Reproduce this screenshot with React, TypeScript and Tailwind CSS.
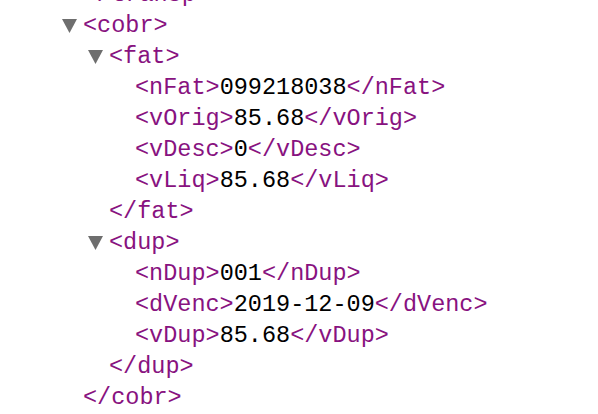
import React from 'react';

type Line =
  | { kind: 'open'; depth: number; tag: string }
  | { kind: 'close'; depth: number; tag: string }
  | { kind: 'leaf'; depth: number; tag: string; value: string };

const lines: Line[] = [
  { kind: 'close', depth: 0, tag: 'transp' },
  { kind: 'open', depth: 0, tag: 'cobr' },
  { kind: 'open', depth: 1, tag: 'fat' },
  { kind: 'leaf', depth: 2, tag: 'nFat', value: '099218038' },
  { kind: 'leaf', depth: 2, tag: 'vOrig', value: '85.68' },
  { kind: 'leaf', depth: 2, tag: 'vDesc', value: '0' },
  { kind: 'leaf', depth: 2, tag: 'vLiq', value: '85.68' },
  { kind: 'close', depth: 1, tag: 'fat' },
  { kind: 'open', depth: 1, tag: 'dup' },
  { kind: 'leaf', depth: 2, tag: 'nDup', value: '001' },
  { kind: 'leaf', depth: 2, tag: 'dVenc', value: '2019-12-09' },
  { kind: 'leaf', depth: 2, tag: 'vDup', value: '85.68' },
  { kind: 'close', depth: 1, tag: 'dup' },
  { kind: 'close', depth: 0, tag: 'cobr' },
];

// text start for each depth
const textPad = ['pl-[83px]', 'pl-[109px]', 'pl-[135px]'];
// start of the triangle for each depth (text start minus 22px)
const arrowPad = ['pl-[62px]', 'pl-[88px]', 'pl-[114px]'];

function Arrow() {
  return (
    <span className="flex w-[21px] shrink-0 items-center">
      <svg width="15" height="14" viewBox="0 0 15 14">
        <polygon points="0,0 15,0 7.5,14" fill="#6e6e6e" />
      </svg>
    </span>
  );
}

export default function App() {
  return (
    <div className="h-[414px] w-[598px] overflow-hidden bg-white">
      <div
        className="-mt-[21px] text-[23.5px] leading-[31px] text-[#881280]"
        style={{ fontFamily: '"Liberation Mono", monospace' }}
      >
        {lines.map((l, i) => {
          if (l.kind === 'open') {
            return (
              <div key={i} className={`flex h-[31px] items-center whitespace-pre ${arrowPad[l.depth]}`}>
                <Arrow />
                <span>{`<${l.tag}>`}</span>
              </div>
            );
          }
          if (l.kind === 'close') {
            return (
              <div key={i} className={`h-[31px] whitespace-pre ${textPad[l.depth]}`}>
                {`</${l.tag}>`}
              </div>
            );
          }
          return (
            <div key={i} className={`h-[31px] whitespace-pre ${textPad[l.depth]}`}>
              {`<${l.tag}>`}
              <span className="text-black">{l.value}</span>
              {`</${l.tag}>`}
            </div>
          );
        })}
      </div>
    </div>
  );
}
